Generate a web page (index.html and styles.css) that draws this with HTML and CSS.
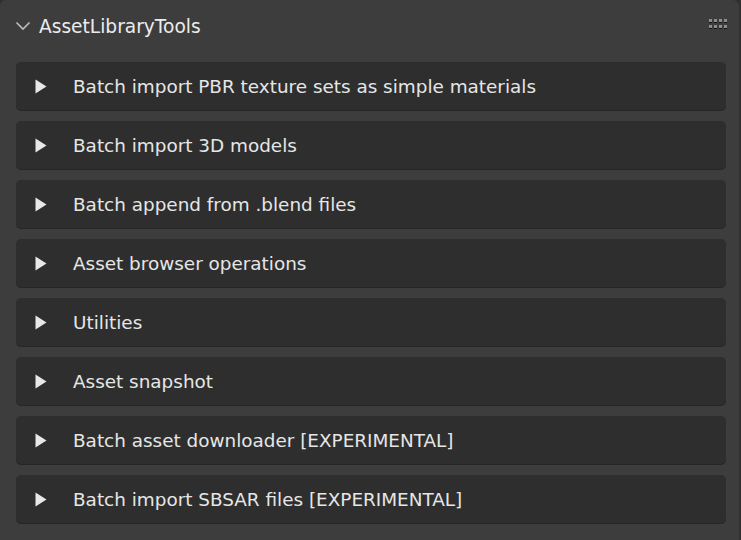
FILE: index.html
```html
<!DOCTYPE html>
<html>
<head>
<meta charset="utf-8">
<link rel="stylesheet" href="styles.css">
</head>
<body>
<div class="panel">
  <div class="header">
    <svg class="chevron" width="16" height="10" viewBox="0 0 16 10"><path d="M1.5 1.5 L8 8 L14.5 1.5" fill="none" stroke="#bdbdbd" stroke-width="1.6"/></svg>
    <span class="title">AssetLibraryTools</span>
    <div class="grip">
      <span></span><span></span><span></span><span></span>
      <span></span><span></span><span></span><span></span>
    </div>
  </div>
  <div class="list">
    <div class="sub"><svg class="tri" width="12" height="15" viewBox="0 0 12 15"><path d="M0.5 0.5 L11.5 7.5 L0.5 14.5 Z" fill="#e8e8e8"/></svg><span>Batch import PBR texture sets as simple materials</span></div>
    <div class="sub"><svg class="tri" width="12" height="15" viewBox="0 0 12 15"><path d="M0.5 0.5 L11.5 7.5 L0.5 14.5 Z" fill="#e8e8e8"/></svg><span>Batch import 3D models</span></div>
    <div class="sub"><svg class="tri" width="12" height="15" viewBox="0 0 12 15"><path d="M0.5 0.5 L11.5 7.5 L0.5 14.5 Z" fill="#e8e8e8"/></svg><span>Batch append from .blend files</span></div>
    <div class="sub"><svg class="tri" width="12" height="15" viewBox="0 0 12 15"><path d="M0.5 0.5 L11.5 7.5 L0.5 14.5 Z" fill="#e8e8e8"/></svg><span>Asset browser operations</span></div>
    <div class="sub"><svg class="tri" width="12" height="15" viewBox="0 0 12 15"><path d="M0.5 0.5 L11.5 7.5 L0.5 14.5 Z" fill="#e8e8e8"/></svg><span>Utilities</span></div>
    <div class="sub"><svg class="tri" width="12" height="15" viewBox="0 0 12 15"><path d="M0.5 0.5 L11.5 7.5 L0.5 14.5 Z" fill="#e8e8e8"/></svg><span>Asset snapshot</span></div>
    <div class="sub"><svg class="tri" width="12" height="15" viewBox="0 0 12 15"><path d="M0.5 0.5 L11.5 7.5 L0.5 14.5 Z" fill="#e8e8e8"/></svg><span>Batch asset downloader [EXPERIMENTAL]</span></div>
    <div class="sub"><svg class="tri" width="12" height="15" viewBox="0 0 12 15"><path d="M0.5 0.5 L11.5 7.5 L0.5 14.5 Z" fill="#e8e8e8"/></svg><span>Batch import SBSAR files [EXPERIMENTAL]</span></div>
  </div>
</div>
</body>
</html>
```
FILE: styles.css
```css
html, body {
  margin: 0;
  padding: 0;
  background: #303030;
  width: 741px;
  height: 540px;
  overflow: hidden;
}
.panel {
  box-sizing: border-box;
  width: 739px;
  height: 560px;
  background: #3d3d3d;
  border-radius: 6px;
  font-family: "DejaVu Sans", sans-serif;
  color: #e6e6e6;
}
.header {
  height: 52px;
  display: flex;
  align-items: center;
  position: relative;
}
.chevron {
  margin-left: 15px;
  margin-right: 8px;
}
.title {
  font-size: 18.6px;
  color: #ececec;
}
.grip {
  position: absolute;
  right: 12px;
  top: 19px;
  display: grid;
  grid-template-columns: repeat(4, 3px);
  grid-auto-rows: 3px;
  column-gap: 2px;
  row-gap: 3px;
}
.grip span {
  background: #8c8c8c;
  box-shadow: 0 1px 0 #141414;
}
.list {
  display: flex;
  flex-direction: column;
  gap: 11px;
  padding: 10px 0 0 16px;
  width: 710px;
}
.sub {
  height: 48px;
  background: #2e2e2e;
  border-radius: 5px;
  box-shadow: 0 1px 0 #262626;
  display: flex;
  align-items: center;
  font-size: 18.4px;
}
.tri {
  margin-left: 19px;
  margin-right: 26px;
}
```
